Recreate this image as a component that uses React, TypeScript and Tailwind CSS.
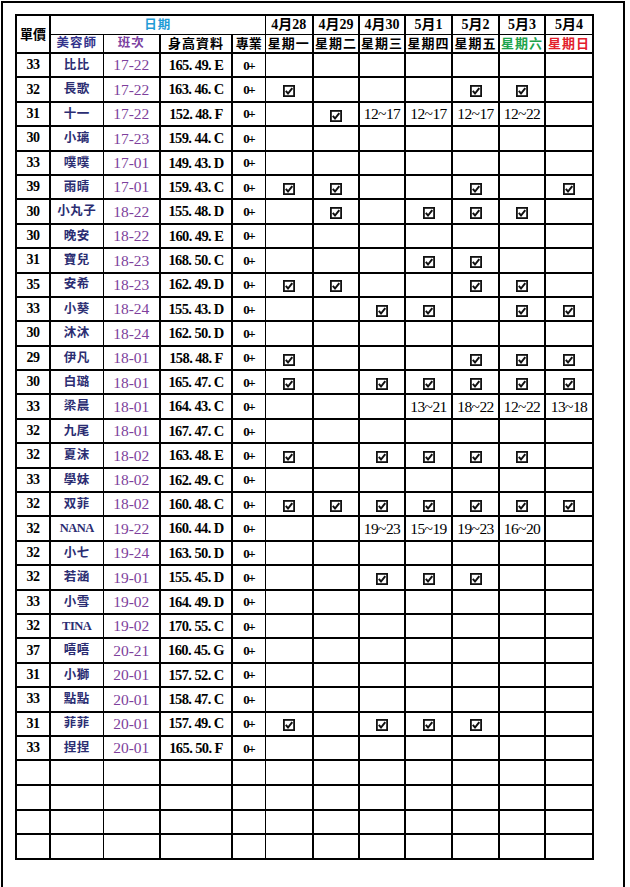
import React from "react";

type Cell = string | boolean | null;
type Row = [string, string, string, string, Cell[]];

const V = true;
const _ = null;

const rows: Row[] = [
  ["33", "比比", "17-22", "165. 49. E", [_, _, _, _, _, _, _]],
  ["32", "長歌", "17-22", "163. 46. C", [V, _, _, _, V, V, _]],
  ["31", "十一", "17-22", "152. 48. F", [_, V, "12~17", "12~17", "12~17", "12~22", _]],
  ["30", "小璃", "17-23", "159. 44. C", [_, _, _, _, _, _, _]],
  ["33", "噗噗", "17-01", "149. 43. D", [_, _, _, _, _, _, _]],
  ["39", "雨晴", "17-01", "159. 43. C", [V, V, _, _, V, _, V]],
  ["30", "小丸子", "18-22", "155. 48. D", [_, V, _, V, V, V, _]],
  ["30", "晚安", "18-22", "160. 49. E", [_, _, _, _, _, _, _]],
  ["31", "寶兒", "18-23", "168. 50. C", [_, _, _, V, V, _, _]],
  ["35", "安希", "18-23", "162. 49. D", [V, V, _, _, V, V, _]],
  ["33", "小葵", "18-24", "155. 43. D", [_, _, V, V, _, V, V]],
  ["30", "沐沐", "18-24", "162. 50. D", [_, _, _, _, _, _, _]],
  ["29", "伊凡", "18-01", "158. 48. F", [V, _, _, _, V, V, V]],
  ["30", "白璐", "18-01", "165. 47. C", [V, _, V, V, V, V, V]],
  ["33", "梁晨", "18-01", "164. 43. C", [_, _, _, "13~21", "18~22", "12~22", "13~18"]],
  ["32", "九尾", "18-01", "167. 47. C", [_, _, _, _, _, _, _]],
  ["32", "夏沫", "18-02", "163. 48. E", [V, _, V, V, V, V, _]],
  ["33", "學妹", "18-02", "162. 49. C", [_, _, _, _, _, _, _]],
  ["32", "双菲", "18-02", "160. 48. C", [V, V, V, V, V, V, V]],
  ["32", "NANA", "19-22", "160. 44. D", [_, _, "19~23", "15~19", "19~23", "16~20", _]],
  ["32", "小七", "19-24", "163. 50. D", [_, _, _, _, _, _, _]],
  ["32", "若涵", "19-01", "155. 45. D", [_, _, V, V, V, _, _]],
  ["33", "小雪", "19-02", "164. 49. D", [_, _, _, _, _, _, _]],
  ["32", "TINA", "19-02", "170. 55. C", [_, _, _, _, _, _, _]],
  ["37", "嘻嘻", "20-21", "160. 45. G", [_, _, _, _, _, _, _]],
  ["31", "小獅", "20-01", "157. 52. C", [_, _, _, _, _, _, _]],
  ["33", "點點", "20-01", "158. 47. C", [_, _, _, _, _, _, _]],
  ["31", "菲菲", "20-01", "157. 49. C", [V, _, V, V, V, _, _]],
  ["33", "捏捏", "20-01", "165. 50. F", [_, _, _, _, _, _, _]],
];

const widths = [34, 53, 57, 72, 33, 48, 46, 46, 47, 47, 46, 48];

const colB = [
  "border-l-2 border-r-2",
  "border-l-2 border-r",
  "border-l border-r-2",
  "border-l-2 border-r-2",
  "border-l-2 border-r",
  "border-l border-r-2",
  "border-l-2 border-r-2",
  "border-l-2 border-r-2",
  "border-l-2 border-r-2",
  "border-l-2 border-r-2",
  "border-l-2 border-r-2",
  "border-l-2 border-r-2",
];

const dates = ["4月28", "4月29", "4月30", "5月1", "5月2", "5月3", "5月4"];
const days = ["星期一", "星期二", "星期三", "星期四", "星期五", "星期六", "星期日"];

function Check() {
  return (
    <svg width="12" height="12" viewBox="0 0 12 12" className="inline-block align-middle">
      <rect x="0.9" y="0.9" width="10.2" height="10.2" fill="none" stroke="#111" strokeWidth="1.8" />
      <path d="M2.8 5.9 L5 8.5 L9.3 3.1" fill="none" stroke="#111" strokeWidth="2" />
    </svg>
  );
}

const base = "border-y-2 border-black border-solid p-0 text-center align-middle";

export default function App() {
  return (
    <div className="bg-white w-[630px] h-[887px] overflow-hidden font-['Liberation_Serif','Noto_Sans_CJK_TC',serif]">
      <div className="ml-[1px] mt-[1px] w-[624px] h-[886px] border-l-2 border-t-2 border-r-2 border-black pl-[12px] pt-[11px]">
        <table className="border-collapse table-fixed w-[577px]">
          <colgroup>
            {widths.map((w, i) => (
              <col key={i} style={{ width: w }} />
            ))}
          </colgroup>
          <thead>
            <tr className="h-[19px]">
              <th rowSpan={2} className={`${base} ${colB[0]} text-[13px] font-bold text-black leading-none`}>
                單價
              </th>
              <th colSpan={4} className="border-t-2 border-b border-l-2 border-r border-black p-0 text-center align-middle text-[12.5px] font-bold text-[#1f9bd6] tracking-[1px] leading-none">
                日期
              </th>
              {dates.map((d, i) => (
                <th
                  key={d}
                  className={`border-t-2 border-b border-black p-0 text-center align-middle ${colB[5 + i]} text-[14px] font-bold text-black leading-none`}
                >
                  {d}
                </th>
              ))}
            </tr>
            <tr className="h-[19px]">
              <th className={`border-t border-b-2 border-black p-0 text-center align-middle ${colB[1]} text-[12.5px] font-bold text-[#34348c] tracking-[1px] leading-none`}>
                美容師
              </th>
              <th className={`border-t border-b-2 border-black p-0 text-center align-middle ${colB[2]} text-[12.5px] font-bold text-[#7b3f9f] tracking-[1px] leading-none`}>
                班次
              </th>
              <th className={`border-t border-b-2 border-black p-0 text-center align-middle ${colB[3]} text-[13px] font-bold text-black tracking-[1px] leading-none`}>
                身高資料
              </th>
              <th className={`border-t border-b-2 border-black p-0 text-center align-middle ${colB[4]} text-[13px] font-bold text-black leading-none`}>
                專業
              </th>
              {days.map((d, i) => (
                <th
                  key={d}
                  className={`border-t border-b-2 border-black p-0 text-center align-middle ${colB[5 + i]} text-[13px] font-bold leading-none tracking-[1px] ${
                    i === 5 ? "text-[#1ea34b]" : i === 6 ? "text-[#e3202b]" : "text-black"
                  }`}
                >
                  {d}
                </th>
              ))}
            </tr>
          </thead>
          <tbody>
            {rows.map((r, ri) => (
              <tr key={ri} className="h-[24.4px]">
                <td className={`${base} ${colB[0]} text-[14px] font-bold text-black leading-none tracking-[-0.5px]`}>{r[0]}</td>
                <td
                  className={`${base} ${colB[1]} text-[12.5px] font-bold text-[#2b2d72] leading-none ${
                    /^[A-Z]+$/.test(r[1]) ? "tracking-[-0.5px]" : "tracking-[0.5px]"
                  }`}
                >
                  {r[1]}
                </td>
                <td className={`${base} ${colB[2]} text-[15.5px] text-[#7e3f9c] leading-none`}>{r[2]}</td>
                <td className={`${base} ${colB[3]} text-[14.5px] font-bold text-black leading-none tracking-[-0.6px] whitespace-pre`}>
                  {r[3]}
                </td>
                <td className={`${base} ${colB[4]} text-[13px] font-bold text-black leading-none tracking-[-1.5px]`}>0+</td>
                {r[4].map((c, ci) => (
                  <td key={ci} className={`${base} ${colB[5 + ci]} text-[15.5px] text-black leading-none tracking-[-0.6px]`}>
                    {c === true ? <Check /> : typeof c === "string" ? c : null}
                  </td>
                ))}
              </tr>
            ))}
            {[0, 1, 2, 3].map((k) => (
              <tr key={"e" + k} className="h-[24.6px]">
                {widths.map((_, ci) => (
                  <td key={ci} className={`${base} ${colB[ci]}`}></td>
                ))}
              </tr>
            ))}
          </tbody>
        </table>
      </div>
    </div>
  );
}
